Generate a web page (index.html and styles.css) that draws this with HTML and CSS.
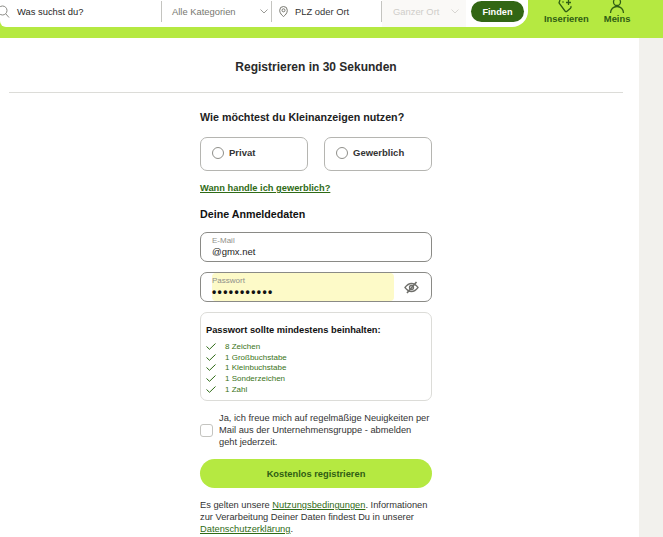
FILE: index.html
```html
<!DOCTYPE html>
<html lang="de">
<head>
<meta charset="utf-8">
<title>Registrieren</title>
<link rel="stylesheet" href="styles.css">
</head>
<body>
<header class="topbar">
  <div class="search">
    <div class="seg seg-q">
      <svg class="ic-search" width="15" height="13" viewBox="0 0 15 13" fill="none" stroke="#8a8a86" stroke-width="1"><circle cx="6.500" cy="5.500" r="4.500"/><path d="M9.700 8.700l3.300 3.800"/></svg>
      <span>Was suchst du?</span>
    </div>
    <div class="seg seg-cat">
      <span>Alle Kategorien</span>
      <svg class="chev" width="8" height="5" viewBox="0 0 8 5" fill="none" stroke="#9a9a96"><path d="M.5.500L4 4 7.500.500"/></svg>
    </div>
    <div class="seg seg-plz">
      <svg width="9" height="11" viewBox="0 0 9 11" fill="none" stroke="#77776f"><path d="M4.500 10.500C2.800 9.200.7 7.200.7 4.300a3.800 3.800 0 0 1 7.600 0c0 2.900-2.100 4.900-3.800 6.200z"/><circle cx="4.500" cy="4.300" r="1.500"/></svg>
      <span>PLZ oder Ort</span>
    </div>
    <div class="seg-ort">
      <span>Ganzer Ort</span>
      <svg class="chev" width="8" height="5" viewBox="0 0 8 5" fill="none" stroke="#d8d6d2"><path d="M.5.500L4 4 7.500.500"/></svg>
    </div>
    <button class="find" type="button">Finden</button>
  </div>
  <nav class="actions">
    <div class="action">
      <svg width="16" height="13" viewBox="0 0 16 13" fill="none" stroke="#2f5d14" stroke-width="1.300"><path d="M2 0l-1 3 6 8c.6.700 1.400.700 2 .2l3.500-3c.6-.6.700-1.300.2-2"/><circle cx="5" cy="2" r=".8" fill="#2f5d14" stroke="none"/><path d="M10.500 0v5M8 2.500h5"/></svg>
      <span>Inserieren</span>
    </div>
    <div class="action">
      <svg width="16" height="13" viewBox="0 0 16 13" fill="none" stroke="#2f5d14" stroke-width="1.300"><circle cx="8" cy="2" r="3.500"/><path d="M1.500 13c0-4 3-6.500 6.500-6.500s6.500 2.500 6.500 6.500"/></svg>
      <span>Meins</span>
    </div>
  </nav>
</header>

<div class="page">
  <main class="panel">
    <h1 class="title">Registrieren in 30 Sekunden</h1>
    <form class="form">
      <h2 class="question">Wie möchtest du Kleinanzeigen nutzen?</h2>
      <div class="choices">
        <label class="choice"><span class="radio"></span>Privat</label>
        <label class="choice"><span class="radio"></span>Gewerblich</label>
      </div>
      <a class="when" href="#">Wann handle ich gewerblich?</a>
      <h2 class="creds">Deine Anmeldedaten</h2>
      <div class="field">
        <div class="field-main">
          <span class="field-label">E-Mail</span>
          <span class="field-value">@gmx.net</span>
        </div>
      </div>
      <div class="field field-pw">
        <div class="field-main autofill">
          <span class="field-label">Passwort</span>
          <span class="field-dots">•••••••••••</span>
        </div>
        <svg class="eye" width="15" height="13" viewBox="0 0 15 13" fill="none" stroke="#6f6f6b" stroke-width="1.300"><path d="M1 6.500C3 3.800 5 2.500 7.500 2.500S12 3.800 14 6.500C12 9.200 10 10.500 7.500 10.500S3 9.200 1 6.500z"/><circle cx="7.500" cy="6.500" r="2"/><path d="M12.500 1L3 12" stroke-width="1.600"/></svg>
      </div>
      <section class="rules">
        <h3 class="rules-title">Passwort sollte mindestens beinhalten:</h3>
        <ul class="rules-list">
          <li><svg width="10" height="7" viewBox="0 0 10 7" fill="none" stroke="#2f6b16"><path d="M.5 3.500L3.500 6.300 9.500.5"/></svg>8 Zeichen</li>
          <li><svg width="10" height="7" viewBox="0 0 10 7" fill="none" stroke="#2f6b16"><path d="M.5 3.500L3.500 6.300 9.500.5"/></svg>1 Großbuchstabe</li>
          <li><svg width="10" height="7" viewBox="0 0 10 7" fill="none" stroke="#2f6b16"><path d="M.5 3.500L3.500 6.300 9.500.5"/></svg>1 Kleinbuchstabe</li>
          <li><svg width="10" height="7" viewBox="0 0 10 7" fill="none" stroke="#2f6b16"><path d="M.5 3.500L3.500 6.300 9.500.5"/></svg>1 Sonderzeichen</li>
          <li><svg width="10" height="7" viewBox="0 0 10 7" fill="none" stroke="#2f6b16"><path d="M.5 3.500L3.500 6.300 9.500.5"/></svg>1 Zahl</li>
        </ul>
      </section>
      <label class="consent">
        <span class="check"></span>
        <span class="consent-text">Ja, ich freue mich auf regelmäßige Neuigkeiten per Mail aus der Unternehmensgruppe - abmelden geht jederzeit.</span>
      </label>
      <button class="submit" type="button">Kostenlos registrieren</button>
      <p class="legal">Es gelten unsere <a href="#">Nutzungsbedingungen</a>. Informationen zur Verarbeitung Deiner Daten findest Du in unserer <a href="#">Datenschutzerklärung</a>.</p>
    </form>
  </main>
  <aside class="side"></aside>
</div>
</body>
</html>
```

FILE: styles.css
```css
* { box-sizing: border-box; }
html, body { margin: 0; padding: 0; }
body {
  width: 663px;
  height: 537px;
  overflow: hidden;
  background: #fff;
  color: #222;
  font-family: "Liberation Sans", Arial, sans-serif;
}

.topbar {
  height: 38px;
  background: #b5e941;
  display: flex;
}
.search {
  width: 528px;
  height: 27px;
  background: #fff;
  border-radius: 0 0 16px 6px;
  display: flex;
  align-items: flex-start;
  font-size: 9.400px;
  flex: none;
}
.seg {
  height: 21px;
  margin-top: 1px;
  display: flex;
  align-items: center;
  flex: none;
}
.seg-q { width: 166px; gap: 6px; margin-left: -4px; color: #1f1f1f; border-right: 1px solid #c4c4c0; }
.ic-search { flex: none; }
.seg-cat { width: 110px; padding-left: 10px; justify-content: space-between; padding-right: 3px; color: #77776f; border-right: 1px solid #c4c4c0; }
.seg-plz { width: 110px; padding-left: 7px; gap: 7px; color: #333; border-right: 1px solid #c4c4c0; }
.seg-ort {
  width: 84px;
  height: 27px;
  flex: none;
  display: flex;
  align-items: center;
  justify-content: space-between;
  padding: 0 7px 5px 11px;
  background: #faf9f7;
  color: #cfcdc9;
}
.find {
  width: 53px;
  height: 21px;
  margin: 1px 0 0 5px;
  border: 0;
  padding: 0;
  border-radius: 11px;
  background: #326614;
  color: #fff;
  font: bold 9.200px "Liberation Sans", Arial, sans-serif;
}

.actions {
  display: flex;
  margin-left: 16px;
  gap: 15px;
}
.action {
  display: flex;
  flex-direction: column;
  align-items: center;
  color: #2f5d14;
  font-size: 9.400px;
  font-weight: bold;
  line-height: 12px;
}

.page {
  display: flex;
  height: 499px;
}
.panel { width: 639px; background: #fff; padding: 0 16px 0 9px; flex: none; }
.side { flex: 1; background: #f2f1ed; }

.title {
  margin: 0;
  height: 55px;
  padding-top: 22px;
  border-bottom: 1px solid #dcdcd8;
  text-align: center;
  font-size: 12px;
  line-height: 15px;
  font-weight: bold;
  color: #2a2a2a;
}

.form { width: 232px; margin-left: 191px; }

.question {
  margin: 16px 0 0;
  font-size: 10.700px;
  line-height: 16px;
  font-weight: bold;
}
.choices { display: flex; gap: 16px; margin-top: 12px; }
.choice {
  width: 108px;
  height: 34px;
  border: 1px solid #b5b5b1;
  border-radius: 7px;
  display: flex;
  align-items: center;
  gap: 5px;
  padding: 0 0 3px 11px;
  font-size: 9.500px;
  font-weight: bold;
  color: #333;
}
.radio {
  width: 12px;
  height: 12px;
  margin-top: 1px;
  border: 1.500px solid #8f8f8a;
  border-radius: 50%;
  flex: none;
}
.when {
  display: block;
  margin-top: 10px;
  font-size: 9.300px;
  line-height: 14px;
  font-weight: bold;
  color: #2f6b16;
}
.creds {
  margin: 11px 0 0;
  font-size: 10.700px;
  line-height: 16px;
  font-weight: bold;
  color: #111;
}

.field {
  height: 30px;
  margin-top: 10px;
  border: 1px solid #8a8a86;
  border-radius: 7px;
  padding-left: 11px;
  display: flex;
  align-items: stretch;
}
.field-pw { padding-right: 12px; justify-content: space-between; align-items: center; }
.field-main {
  width: 182px;
  height: 28px;
  display: flex;
  flex-direction: column;
  padding-top: 3px;
}
.autofill { background: #fdfac8; border-radius: 4px; }
.field-label { font-size: 8px; line-height: 9px; color: #8f8f8a; }
.field-value { font-size: 9.500px; line-height: 14px; color: #1c1c1c; }
.field-dots { font-size: 12px; line-height: 14px; color: #111; font-weight: bold; letter-spacing: 1.400px; }
.eye { flex: none; }

.rules {
  height: 89px;
  margin-top: 10px;
  border: 1px solid #dcdcd8;
  border-radius: 7px;
  padding: 11px 5px 0;
}
.rules-title { margin: 0; font-size: 9.300px; line-height: 13px; font-weight: bold; color: #111; }
.rules-list { list-style: none; margin: 4px 0 0; padding: 0; }
.rules-list li {
  display: flex;
  align-items: center;
  gap: 9px;
  height: 10.700px;
  font-size: 8px;
  color: #3a7420;
}
.rules-list svg { flex: none; }

.consent {
  display: flex;
  align-items: center;
  gap: 6px;
  margin-top: 11px;
  font-size: 9.300px;
  line-height: 12px;
  color: #333;
}
.consent-text { padding-right: 1.500px; }
.check {
  width: 13px;
  height: 13px;
  border: 1px solid #c4c4c0;
  border-radius: 3px;
  flex: none;
}
.submit {
  display: block;
  width: 100%;
  height: 29px;
  margin-top: 11px;
  border: 0;
  border-radius: 15px;
  background: #b5e941;
  color: #2f5d14;
  font: bold 9.300px "Liberation Sans", Arial, sans-serif;
}
.legal {
  margin: 11px 0 0;
  font-size: 9.300px;
  line-height: 12px;
  color: #333;
}
.legal a { color: #2f6b16; }
```
